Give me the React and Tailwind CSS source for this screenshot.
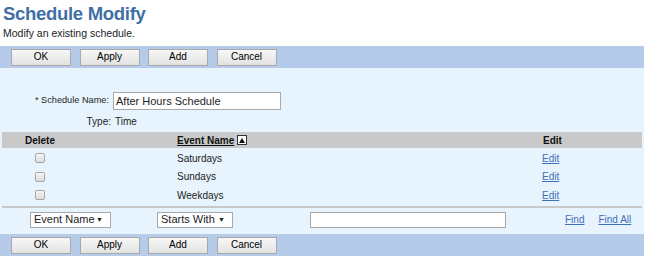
import React from 'react';

const Btn = ({ label }) => (
  <button className="w-[60px] h-[17px] border border-[#a8a8a8] bg-gradient-to-b from-[#f7f7f7] to-[#e2e2e2] text-[10px] leading-none text-black">
    {label}
  </button>
);

const Toolbar = () => (
  <div className="w-[644px] h-[22px] bg-[#b6cae9] flex items-center gap-[8.5px] pl-[11px]">
    <Btn label="OK" />
    <Btn label="Apply" />
    <Btn label="Add" />
    <Btn label="Cancel" />
  </div>
);

const Select = ({ label, width }) => (
  <div className={`${width} h-[16px] bg-white border border-[#a9a9a9] flex items-center justify-between px-[3px] text-[11px] leading-none`}>
    <span>{label}</span>
    <span className="text-[7px] pr-[4px]">▼</span>
  </div>
);

const events = ['Saturdays', 'Sundays', 'Weekdays'];

const App = () => {
  return (
    <div className="w-[646px] h-[260px] bg-white font-['Liberation_Sans',Arial,sans-serif] text-[#222]">
      <h1 className="pl-[3px] pt-[1px] h-[25px] text-[18.5px] font-bold tracking-[-0.3px] text-[#3f6fa6] leading-[25px]">
        Schedule Modify
      </h1>
      <p className="pl-[3px] text-[10.5px] leading-[14px] h-[20px] pt-[1px]">Modify an existing schedule.</p>
      <div className="h-[1px]" />
      <Toolbar />
      <div className="w-[644px] h-[166px] bg-[#e7f4fd] flex flex-col">
        <div className="h-[24px]" />
        <div className="flex items-center h-[18px]">
          <span className="w-[110px] text-right text-[9.2px] pr-[1px]">* Schedule Name:</span>
          <div className="ml-[3px] w-[168px] h-[18px] bg-white border border-[#a9a9a9] text-[11px] leading-[16px] pl-[2px]">
            After Hours Schedule
          </div>
        </div>
        <div className="flex items-center h-[22px] text-[10px]">
          <span className="w-[111px] text-right">Type:</span>
          <span className="pl-[4px]">Time</span>
        </div>
        <div className="mx-[2px] grid grid-cols-[76px_464px_100px] h-[16px] bg-[#c9c9c9] items-center text-[10px] font-bold text-[#111]">
          <span className="text-center">Delete</span>
          <span className="pl-[99px] flex items-center gap-[3px]">
            <span className="underline">Event Name</span>
            <span className="w-[10px] h-[10px] border border-[#333] bg-white flex items-center justify-center">
              <svg width="6" height="5" viewBox="0 0 6 5"><path d="M3 0L6 5H0z" fill="#111" /></svg>
            </span>
          </span>
          <span className="pl-[1px]">Edit</span>
        </div>
        <div className="pt-[1px]">
          {events.map((e) => (
            <div key={e} className="mx-[2px] grid grid-cols-[76px_464px_100px] h-[18.5px] items-center text-[10px]">
              <span className="flex justify-center">
                <span className="w-[10px] h-[10px] rounded-[2px] border border-[#a8a8a8] bg-gradient-to-b from-[#f4f4f4] to-[#dcdcdc]" />
              </span>
              <span className="pl-[99px]">{e}</span>
              <a className="underline text-[#3e6fb7]">Edit</a>
            </div>
          ))}
        </div>
        <div className="mx-[2px] h-[2px] bg-[#c8c8c8] mt-[1px]" />
        <div className="flex items-center h-[24px] text-[10px]">
          <div className="pl-[30px]"><Select label="Event Name" width="w-[81px]" /></div>
          <div className="pl-[46px]"><Select label="Starts With" width="w-[76px]" /></div>
          <div className="ml-[77px] w-[196px] h-[16px] bg-white border border-[#a9a9a9]" />
          <a className="ml-[59px] underline text-[#3e6fb7]">Find</a>
          <a className="ml-[14px] underline text-[#3e6fb7]">Find All</a>
        </div>
      </div>
      <Toolbar />
    </div>
  );
};

export default App;
